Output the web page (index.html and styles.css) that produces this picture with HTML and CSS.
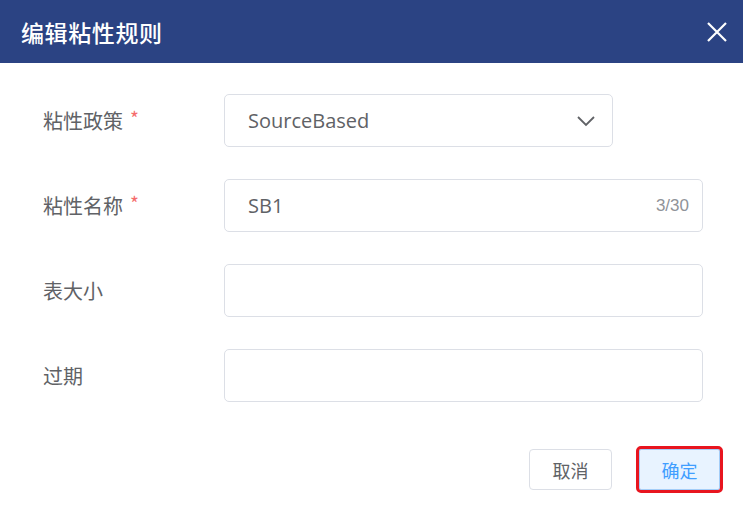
FILE: index.html
```html
<!DOCTYPE html>
<html lang="zh">
<head>
<meta charset="utf-8">
<link rel="stylesheet" href="styles.css">
</head>
<body>
<div class="dialog">
  <div class="header">
    <span class="title">编辑粘性规则</span>
    <svg class="close" width="22" height="22" viewBox="0 0 22 22"><path d="M2 2 L20 20 M20 2 L2 20" stroke="#fff" stroke-width="2.2" fill="none"/></svg>
  </div>
  <div class="body">
    <div class="row">
      <div class="label">粘性政策<span class="req">*</span></div>
      <div class="field select">
        <span class="value">SourceBased</span>
        <svg class="chev" width="20" height="12" viewBox="0 0 20 12"><path d="M2 2 L10 10 L18 2" stroke="#606266" stroke-width="1.8" fill="none"/></svg>
      </div>
    </div>
    <div class="row">
      <div class="label">粘性名称<span class="req">*</span></div>
      <div class="field wide">
        <span class="value">SB1</span>
        <span class="count">3/30</span>
      </div>
    </div>
    <div class="row">
      <div class="label">表大小</div>
      <div class="field wide"></div>
    </div>
    <div class="row">
      <div class="label">过期</div>
      <div class="field wide"></div>
    </div>
  </div>
  <div class="footer">
    <button class="btn">取消</button>
    <button class="btn primary">确定</button>
  </div>
</div>
</body>
</html>
```
FILE: styles.css
```css
html, body {
  margin: 0;
  padding: 0;
  background: #fff;
}
body {
  font-family: "Noto Sans CJK SC", "Noto Sans", sans-serif;
  width: 743px;
  height: 513px;
  overflow: hidden;
}
.dialog {
  display: flex;
  flex-direction: column;
  height: 513px;
}
.header {
  height: 63px;
  background: #2b4383;
  display: flex;
  align-items: center;
  justify-content: space-between;
  padding: 0 15px 0 21px;
  box-sizing: border-box;
}
.title {
  color: #fff;
  font-size: 23px;
  font-weight: 500;
  letter-spacing: 0.6px;
}
.close {
  display: block;
}
.body {
  padding: 31px 40px 0 43px;
  display: flex;
  flex-direction: column;
  gap: 32px;
}
.row {
  display: flex;
  align-items: center;
  height: 53px;
}
.label {
  width: 181px;
  font-size: 20px;
  color: #606266;
  display: flex;
  align-items: center;
}
.req {
  color: #f56c6c;
  font-size: 19px;
  margin-left: 7px;
  position: relative;
  top: -3px;
}
.field {
  height: 53px;
  box-sizing: border-box;
  border: 1px solid #dcdfe6;
  border-radius: 5px;
  display: flex;
  align-items: center;
  justify-content: space-between;
  padding: 0 13px 0 23px;
}
.select {
  width: 389px;
  padding-right: 16px;
}
.wide {
  width: 479px;
}
.value {
  font-family: "Open Sans", "Noto Sans", sans-serif;
  font-size: 20px;
  color: #5f6266;
}
.count {
  font-family: "Liberation Sans", Arial, sans-serif;
  font-size: 17px;
  color: #909399;
}
.footer {
  display: flex;
  justify-content: flex-end;
  gap: 27px;
  padding: 47px 23px 0 0;
}
.btn {
  width: 83px;
  height: 41px;
  box-sizing: border-box;
  border: 1px solid #dcdfe6;
  border-radius: 4px;
  background: #fff;
  color: #606266;
  font-family: "Noto Sans CJK SC", sans-serif;
  font-size: 18px;
  padding: 0;
}
.btn.primary {
  width: 81px;
  background: #e8f3ff;
  border-color: #a3cdf8;
  color: #409eff;
  outline: 3px solid #e8151f;
  outline-offset: 0;
  border-radius: 2px;
}
```
